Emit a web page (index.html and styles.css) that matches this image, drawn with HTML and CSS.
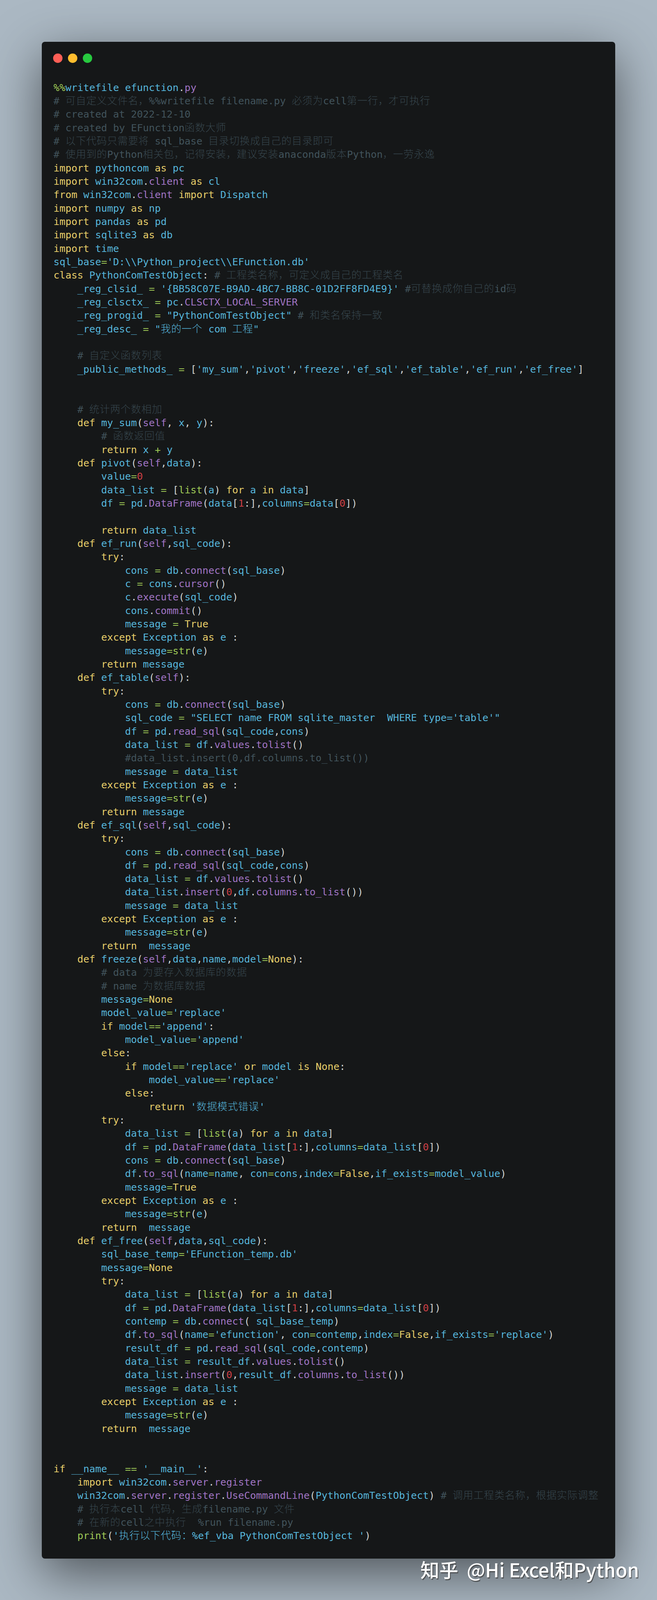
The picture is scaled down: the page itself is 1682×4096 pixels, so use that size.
FILE: index.html
```html
<!DOCTYPE html>
<html lang="zh">
<head>
<meta charset="utf-8">
<title>efunction.py</title>
<link rel="stylesheet" href="styles.css">
</head>
<body>
<main class="window">
<div class="controls"><span class="dot red"></span><span class="dot yellow"></span><span class="dot green"></span></div>
<pre class="code"><span class="g">%%</span>writefile efunction<span class="w">.</span><span class="p">py</span>
<span class="c"># <span class="z">可自定义文件名，</span>%%writefile filename.py <span class="z">必须为</span>cell<span class="z">第一行，才可执行</span></span>
<span class="c"># created at 2022-12-10</span>
<span class="c"># created by EFunction<span class="z">函数大师</span></span>
<span class="c"># <span class="z">以下代码只需要将</span> sql_base <span class="z">目录切换成自己的目录即可</span></span>
<span class="c"># <span class="z">使用到的</span>Python<span class="z">相关包，记得安装，建议安装</span>anaconda<span class="z">版本</span>Python<span class="z">，一劳永逸</span></span>
<span class="k">import</span> pythoncom <span class="k">as</span> pc
<span class="k">import</span> win32com<span class="w">.</span><span class="p">client</span> <span class="k">as</span> cl
<span class="k">from</span> win32com<span class="w">.</span><span class="p">client</span> <span class="k">import</span> Dispatch
<span class="k">import</span> numpy <span class="k">as</span> np
<span class="k">import</span> pandas <span class="k">as</span> pd
<span class="k">import</span> sqlite3 <span class="k">as</span> db
<span class="k">import</span> time
sql_base<span class="g">=</span>'D:\\Python_project\\EFunction.db'
<span class="k">class</span> PythonComTestObject<span class="w">:</span> <span class="c"># <span class="z">工程类名称，可定义成自己的工程类名</span></span>
    _reg_clsid_ <span class="g">=</span> '{BB58C07E-B9AD-4BC7-BB8C-01D2FF8FD4E9}' <span class="c">#<span class="z">可替换成你自己的</span>id<span class="z">码</span></span>
    _reg_clsctx_ <span class="g">=</span> pc<span class="w">.</span><span class="p">CLSCTX_LOCAL_SERVER</span>
    _reg_progid_ <span class="g">=</span> "PythonComTestObject" <span class="c"># <span class="z">和类名保持一致</span></span>
    _reg_desc_ <span class="g">=</span> "<span class="z">我的一个</span> com <span class="z">工程</span>"

    <span class="c"># <span class="z">自定义函数列表</span></span>
    _public_methods_ <span class="g">=</span> <span class="w">[</span>'my_sum'<span class="w">,</span>'pivot'<span class="w">,</span>'freeze'<span class="w">,</span>'ef_sql'<span class="w">,</span>'ef_table'<span class="w">,</span>'ef_run'<span class="w">,</span>'ef_free'<span class="w">]</span>


    <span class="c"># <span class="z">统计两个数相加</span></span>
    <span class="k">def</span> my_sum<span class="w">(</span><span class="p">self</span><span class="w">, </span>x<span class="w">, </span>y<span class="w">):</span>
        <span class="c"># <span class="z">函数返回值</span></span>
        <span class="k">return</span> x <span class="g">+</span> y
    <span class="k">def</span> pivot<span class="w">(</span><span class="p">self</span><span class="w">,</span>data<span class="w">):</span>
        value<span class="g">=</span><span class="n">0</span>
        data_list <span class="g">=</span> <span class="w">[</span><span class="g">list</span><span class="w">(</span>a<span class="w">)</span> <span class="k">for</span> a <span class="k">in</span> data<span class="w">]</span>
        df <span class="g">=</span> pd<span class="w">.</span><span class="p">DataFrame</span><span class="w">(</span>data<span class="w">[</span><span class="n">1</span><span class="w">:],</span>columns<span class="g">=</span>data<span class="w">[</span><span class="n">0</span><span class="w">])</span>

        <span class="k">return</span> data_list
    <span class="k">def</span> ef_run<span class="w">(</span><span class="p">self</span><span class="w">,</span>sql_code<span class="w">):</span>
        <span class="k">try</span><span class="w">:</span>
            cons <span class="g">=</span> db<span class="w">.</span><span class="p">connect</span><span class="w">(</span>sql_base<span class="w">)</span>
            c <span class="g">=</span> cons<span class="w">.</span><span class="p">cursor</span><span class="w">()</span>
            c<span class="w">.</span><span class="p">execute</span><span class="w">(</span>sql_code<span class="w">)</span>
            cons<span class="w">.</span><span class="p">commit</span><span class="w">()</span>
            message <span class="g">=</span> <span class="k">True</span>
        <span class="k">except</span> Exception <span class="k">as</span> e <span class="w">:</span>
            message<span class="g">=str</span><span class="w">(</span>e<span class="w">)</span>
        <span class="k">return</span> message
    <span class="k">def</span> ef_table<span class="w">(</span><span class="p">self</span><span class="w">):</span>
        <span class="k">try</span><span class="w">:</span>
            cons <span class="g">=</span> db<span class="w">.</span><span class="p">connect</span><span class="w">(</span>sql_base<span class="w">)</span>
            sql_code <span class="g">=</span> "SELECT name FROM sqlite_master  WHERE type='table'"
            df <span class="g">=</span> pd<span class="w">.</span><span class="p">read_sql</span><span class="w">(</span>sql_code<span class="w">,</span>cons<span class="w">)</span>
            data_list <span class="g">=</span> df<span class="w">.</span><span class="p">values</span><span class="w">.</span><span class="p">tolist</span><span class="w">()</span>
            <span class="c">#data_list.insert(0,df.columns.to_list())</span>
            message <span class="g">=</span> data_list
        <span class="k">except</span> Exception <span class="k">as</span> e <span class="w">:</span>
            message<span class="g">=str</span><span class="w">(</span>e<span class="w">)</span>
        <span class="k">return</span> message
    <span class="k">def</span> ef_sql<span class="w">(</span><span class="p">self</span><span class="w">,</span>sql_code<span class="w">):</span>
        <span class="k">try</span><span class="w">:</span>
            cons <span class="g">=</span> db<span class="w">.</span><span class="p">connect</span><span class="w">(</span>sql_base<span class="w">)</span>
            df <span class="g">=</span> pd<span class="w">.</span><span class="p">read_sql</span><span class="w">(</span>sql_code<span class="w">,</span>cons<span class="w">)</span>
            data_list <span class="g">=</span> df<span class="w">.</span><span class="p">values</span><span class="w">.</span><span class="p">tolist</span><span class="w">()</span>
            data_list<span class="w">.</span><span class="p">insert</span><span class="w">(</span><span class="n">0</span><span class="w">,</span>df<span class="w">.</span><span class="p">columns</span><span class="w">.</span><span class="p">to_list</span><span class="w">())</span>
            message <span class="g">=</span> data_list
        <span class="k">except</span> Exception <span class="k">as</span> e <span class="w">:</span>
            message<span class="g">=str</span><span class="w">(</span>e<span class="w">)</span>
        <span class="k">return</span>  message
    <span class="k">def</span> freeze<span class="w">(</span><span class="p">self</span><span class="w">,</span>data<span class="w">,</span>name<span class="w">,</span>model<span class="g">=</span><span class="k">None</span><span class="w">):</span>
        <span class="c"># data <span class="z">为要存入数据库的数据</span></span>
        <span class="c"># name <span class="z">为数据库数据</span></span>
        message<span class="g">=</span><span class="k">None</span>
        model_value<span class="g">=</span>'replace'
        <span class="k">if</span> model<span class="g">==</span>'append'<span class="w">:</span>
            model_value<span class="g">=</span>'append'
        <span class="k">else</span><span class="w">:</span>
            <span class="k">if</span> model<span class="g">==</span>'replace' <span class="k">or</span> model <span class="k">is</span> <span class="k">None</span><span class="w">:</span>
                model_value<span class="g">==</span>'replace'
            <span class="k">else</span><span class="w">:</span>
                <span class="k">return</span> '<span class="z">数据模式错误</span>'
        <span class="k">try</span><span class="w">:</span>
            data_list <span class="g">=</span> <span class="w">[</span><span class="g">list</span><span class="w">(</span>a<span class="w">)</span> <span class="k">for</span> a <span class="k">in</span> data<span class="w">]</span>
            df <span class="g">=</span> pd<span class="w">.</span><span class="p">DataFrame</span><span class="w">(</span>data_list<span class="w">[</span><span class="n">1</span><span class="w">:],</span>columns<span class="g">=</span>data_list<span class="w">[</span><span class="n">0</span><span class="w">])</span>
            cons <span class="g">=</span> db<span class="w">.</span><span class="p">connect</span><span class="w">(</span>sql_base<span class="w">)</span>
            df<span class="w">.</span><span class="p">to_sql</span><span class="w">(</span>name<span class="g">=</span>name<span class="w">, </span>con<span class="g">=</span>cons<span class="w">,</span>index<span class="g">=</span><span class="k">False</span><span class="w">,</span>if_exists<span class="g">=</span>model_value<span class="w">)</span>
            message<span class="g">=</span><span class="k">True</span>
        <span class="k">except</span> Exception <span class="k">as</span> e <span class="w">:</span>
            message<span class="g">=str</span><span class="w">(</span>e<span class="w">)</span>
        <span class="k">return</span>  message
    <span class="k">def</span> ef_free<span class="w">(</span><span class="p">self</span><span class="w">,</span>data<span class="w">,</span>sql_code<span class="w">):</span>
        sql_base_temp<span class="g">=</span>'EFunction_temp.db'
        message<span class="g">=</span><span class="k">None</span>
        <span class="k">try</span><span class="w">:</span>
            data_list <span class="g">=</span> <span class="w">[</span><span class="g">list</span><span class="w">(</span>a<span class="w">)</span> <span class="k">for</span> a <span class="k">in</span> data<span class="w">]</span>
            df <span class="g">=</span> pd<span class="w">.</span><span class="p">DataFrame</span><span class="w">(</span>data_list<span class="w">[</span><span class="n">1</span><span class="w">:],</span>columns<span class="g">=</span>data_list<span class="w">[</span><span class="n">0</span><span class="w">])</span>
            contemp <span class="g">=</span> db<span class="w">.</span><span class="p">connect</span><span class="w">( </span>sql_base_temp<span class="w">)</span>
            df<span class="w">.</span><span class="p">to_sql</span><span class="w">(</span>name<span class="g">=</span>'efunction'<span class="w">, </span>con<span class="g">=</span>contemp<span class="w">,</span>index<span class="g">=</span><span class="k">False</span><span class="w">,</span>if_exists<span class="g">=</span>'replace'<span class="w">)</span>
            result_df <span class="g">=</span> pd<span class="w">.</span><span class="p">read_sql</span><span class="w">(</span>sql_code<span class="w">,</span>contemp<span class="w">)</span>
            data_list <span class="g">=</span> result_df<span class="w">.</span><span class="p">values</span><span class="w">.</span><span class="p">tolist</span><span class="w">()</span>
            data_list<span class="w">.</span><span class="p">insert</span><span class="w">(</span><span class="n">0</span><span class="w">,</span>result_df<span class="w">.</span><span class="p">columns</span><span class="w">.</span><span class="p">to_list</span><span class="w">())</span>
            message <span class="g">=</span> data_list
        <span class="k">except</span> Exception <span class="k">as</span> e <span class="w">:</span>
            message<span class="g">=str</span><span class="w">(</span>e<span class="w">)</span>
        <span class="k">return</span>  message


<span class="k">if</span> __name__ <span class="g">==</span> '__main__'<span class="w">:</span>
    <span class="k">import</span> win32com<span class="w">.</span><span class="p">server</span><span class="w">.</span><span class="p">register</span>
    win32com<span class="w">.</span><span class="p">server</span><span class="w">.</span><span class="p">register</span><span class="w">.</span><span class="p">UseCommandLine</span><span class="w">(</span>PythonComTestObject<span class="w">)</span> <span class="c"># <span class="z">调用工程类名称，根据实际调整</span></span>
    <span class="c"># <span class="z">执行本</span>cell <span class="z">代码，生成</span>filename.py <span class="z">文件</span></span>
    <span class="c"># <span class="z">在新的</span>cell<span class="z">之中执行</span>  %run filename.py</span>
    <span class="g">print</span><span class="w">(</span>'<span class="z">执行以下代码：</span>%ef_vba PythonComTestObject '<span class="w">)</span></pre>
</main>
<div class="watermark">知乎&nbsp;&nbsp;@Hi Excel和Python</div>
</body>
</html>
```
FILE: styles.css
```css
html, body {
  margin: 0;
  padding: 0;
}

body {
  position: relative;
  min-height: 4096px;
  background: #abb8c3;
  overflow: hidden;
}

.window {
  margin: 107px;
  padding: 30px 29px 41px;
  background: #151718;
  border-radius: 8px;
  box-shadow: 0 38px 130px rgba(0, 0, 0, 0.55);
}

.controls {
  display: flex;
  gap: 14.3px;
  margin-bottom: 46px;
}

.dot {
  width: 23.8px;
  height: 23.8px;
  border-radius: 50%;
}

.red { background: #ff5f56; }
.yellow { background: #ffbd2e; }
.green { background: #27c93f; }

.code {
  margin: 0;
  padding-left: 1px;
  font-family: "DejaVu Sans Mono", "Noto Sans CJK SC", monospace;
  font-size: 25.33px;
  line-height: 34.33px;
  color: #55b5db;
  white-space: pre;
}

.k { color: #e6cd69; }
.g { color: #9fca56; }
.p { color: #a074c4; }
.w { color: #cfd2d1; }
.n { color: #cd3f45; }
.c { color: #41535b; }

.z {
  font-size: 25.9px;
  font-weight: 300;
  line-height: 0;
  letter-spacing: 0.8px;
}

.c .z { color: #36454c; }

.watermark {
  position: absolute;
  top: 3984px;
  right: 46px;
  font-family: "Noto Sans CJK SC", "Noto Sans", sans-serif;
  font-size: 48.5px;
  font-weight: 500;
  line-height: 66px;
  color: #fff;
  text-shadow: 2px 3px 0 rgba(60, 60, 60, 0.7);
  white-space: nowrap;
}
```
